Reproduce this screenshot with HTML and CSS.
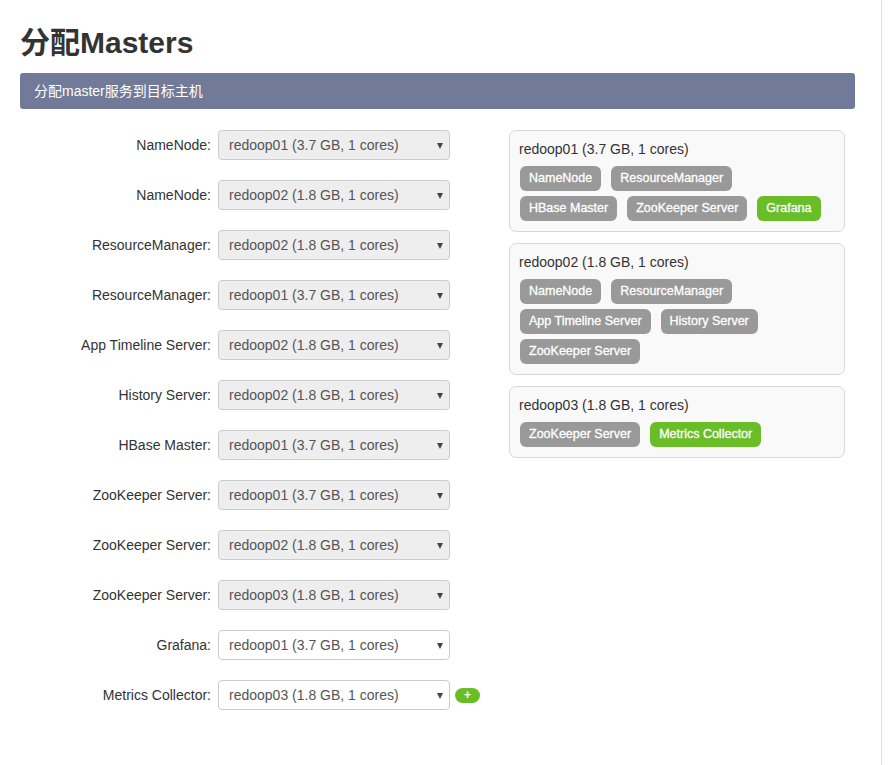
FILE: index.html
```html
<!DOCTYPE html>
<html lang="zh-CN">
<head>
<meta charset="utf-8">
<title>分配Masters</title>
<link rel="stylesheet" href="styles.css">
</head>
<body>
<div class="page">
  <h2 class="title">分配Masters</h2>
  <div class="banner">分配master服务到目标主机</div>
  <div class="main">
    <div class="form">
      <div class="row"><label class="lbl">NameNode:</label><div class="sel-wrap"><select class="sel locked"><option>redoop01 (3.7 GB, 1 cores)</option></select></div></div>
      <div class="row"><label class="lbl">NameNode:</label><div class="sel-wrap"><select class="sel locked"><option>redoop02 (1.8 GB, 1 cores)</option></select></div></div>
      <div class="row"><label class="lbl">ResourceManager:</label><div class="sel-wrap"><select class="sel locked"><option>redoop02 (1.8 GB, 1 cores)</option></select></div></div>
      <div class="row"><label class="lbl">ResourceManager:</label><div class="sel-wrap"><select class="sel locked"><option>redoop01 (3.7 GB, 1 cores)</option></select></div></div>
      <div class="row"><label class="lbl">App Timeline Server:</label><div class="sel-wrap"><select class="sel locked"><option>redoop02 (1.8 GB, 1 cores)</option></select></div></div>
      <div class="row"><label class="lbl">History Server:</label><div class="sel-wrap"><select class="sel locked"><option>redoop02 (1.8 GB, 1 cores)</option></select></div></div>
      <div class="row"><label class="lbl">HBase Master:</label><div class="sel-wrap"><select class="sel locked"><option>redoop01 (3.7 GB, 1 cores)</option></select></div></div>
      <div class="row"><label class="lbl">ZooKeeper Server:</label><div class="sel-wrap"><select class="sel locked"><option>redoop01 (3.7 GB, 1 cores)</option></select></div></div>
      <div class="row"><label class="lbl">ZooKeeper Server:</label><div class="sel-wrap"><select class="sel locked"><option>redoop02 (1.8 GB, 1 cores)</option></select></div></div>
      <div class="row"><label class="lbl">ZooKeeper Server:</label><div class="sel-wrap"><select class="sel locked"><option>redoop03 (1.8 GB, 1 cores)</option></select></div></div>
      <div class="row"><label class="lbl">Grafana:</label><div class="sel-wrap"><select class="sel"><option>redoop01 (3.7 GB, 1 cores)</option></select></div></div>
      <div class="row"><label class="lbl">Metrics Collector:</label><div class="sel-wrap"><select class="sel"><option>redoop03 (1.8 GB, 1 cores)</option></select></div><span class="plus">+</span></div>
    </div>
    <div class="hosts">
      <div class="host">
        <div class="host-name">redoop01 (3.7 GB, 1 cores)</div>
        <div class="tags">
          <span class="tag">NameNode</span><span class="tag">ResourceManager</span><span class="tag">HBase Master</span><span class="tag">ZooKeeper Server</span><span class="tag new">Grafana</span>
        </div>
      </div>
      <div class="host">
        <div class="host-name">redoop02 (1.8 GB, 1 cores)</div>
        <div class="tags">
          <span class="tag">NameNode</span><span class="tag">ResourceManager</span><span class="tag">App Timeline Server</span><span class="tag">History Server</span><span class="tag">ZooKeeper Server</span>
        </div>
      </div>
      <div class="host">
        <div class="host-name">redoop03 (1.8 GB, 1 cores)</div>
        <div class="tags">
          <span class="tag">ZooKeeper Server</span><span class="tag new">Metrics Collector</span>
        </div>
      </div>
    </div>
  </div>
</div>
</body>
</html>
```

FILE: styles.css
```css
* { box-sizing: border-box; }
html, body {
  margin: 0;
  padding: 0;
  background: #fff;
}
body {
  font-family: "Liberation Sans", Arial, "Noto Sans CJK SC", sans-serif;
  font-size: 14px;
  color: #333;
}
.page {
  width: 882px;
  min-height: 765px;
  border-right: 1px solid #e0e0e0;
  padding: 26px 26px 0 20px;
}
.title {
  margin: 0;
  font-size: 30px;
  line-height: 33px;
  font-weight: bold;
  color: #333;
}
.banner {
  margin-top: 14px;
  height: 36px;
  line-height: 36px;
  padding: 0 14px;
  background: #717a99;
  color: #fff;
  font-size: 14px;
  border-radius: 3px;
}
.main {
  display: flex;
  margin-top: 21px;
}
.form {
  width: 489px;
  display: flex;
  flex-direction: column;
  gap: 20px;
}
.row {
  display: flex;
  align-items: center;
  height: 30px;
}
.lbl {
  width: 191px;
  margin-right: 7px;
  text-align: right;
  color: #333;
}
.sel-wrap {
  position: relative;
  width: 232px;
  height: 30px;
}
.sel-wrap::after {
  content: "";
  position: absolute;
  right: 7px;
  top: 13px;
  border-left: 3.5px solid transparent;
  border-right: 3.5px solid transparent;
  border-top: 6px solid #444;
  pointer-events: none;
}
.sel {
  -webkit-appearance: none;
  appearance: none;
  width: 100%;
  height: 30px;
  margin: 0;
  padding: 0 20px 0 10px;
  font-family: inherit;
  font-size: 14px;
  color: #555;
  background: #fff;
  border: 1px solid #ccc;
  border-radius: 4px;
  outline: none;
}
.sel.locked {
  background: #eee;
}
.plus {
  margin-left: 5px;
  width: 25px;
  height: 15px;
  border-radius: 8px;
  background: #69be28;
  color: #fff;
  font-size: 12px;
  font-weight: bold;
  line-height: 15px;
  text-align: center;
}
.hosts {
  width: 336px;
  display: flex;
  flex-direction: column;
  gap: 11px;
}
.host {
  background: #f9f9f9;
  border: 1px solid #d8d8d8;
  border-radius: 7px;
  padding: 8px 9px 10px 8px;
}
.host-name {
  line-height: 20px;
  color: #333;
  padding-left: 1px;
}
.tags {
  margin-top: 7px;
  display: flex;
  flex-wrap: wrap;
  gap: 5px 10px;
  padding-left: 2px;
}
.tag {
  display: inline-block;
  height: 25px;
  line-height: 25px;
  padding: 0 9px;
  border-radius: 6px;
  background: #999;
  color: #fff;
  font-size: 12.5px;
  font-weight: normal;
  -webkit-text-stroke: 0.3px #fff;
}
.tag.new {
  background: #69be28;
}
```
